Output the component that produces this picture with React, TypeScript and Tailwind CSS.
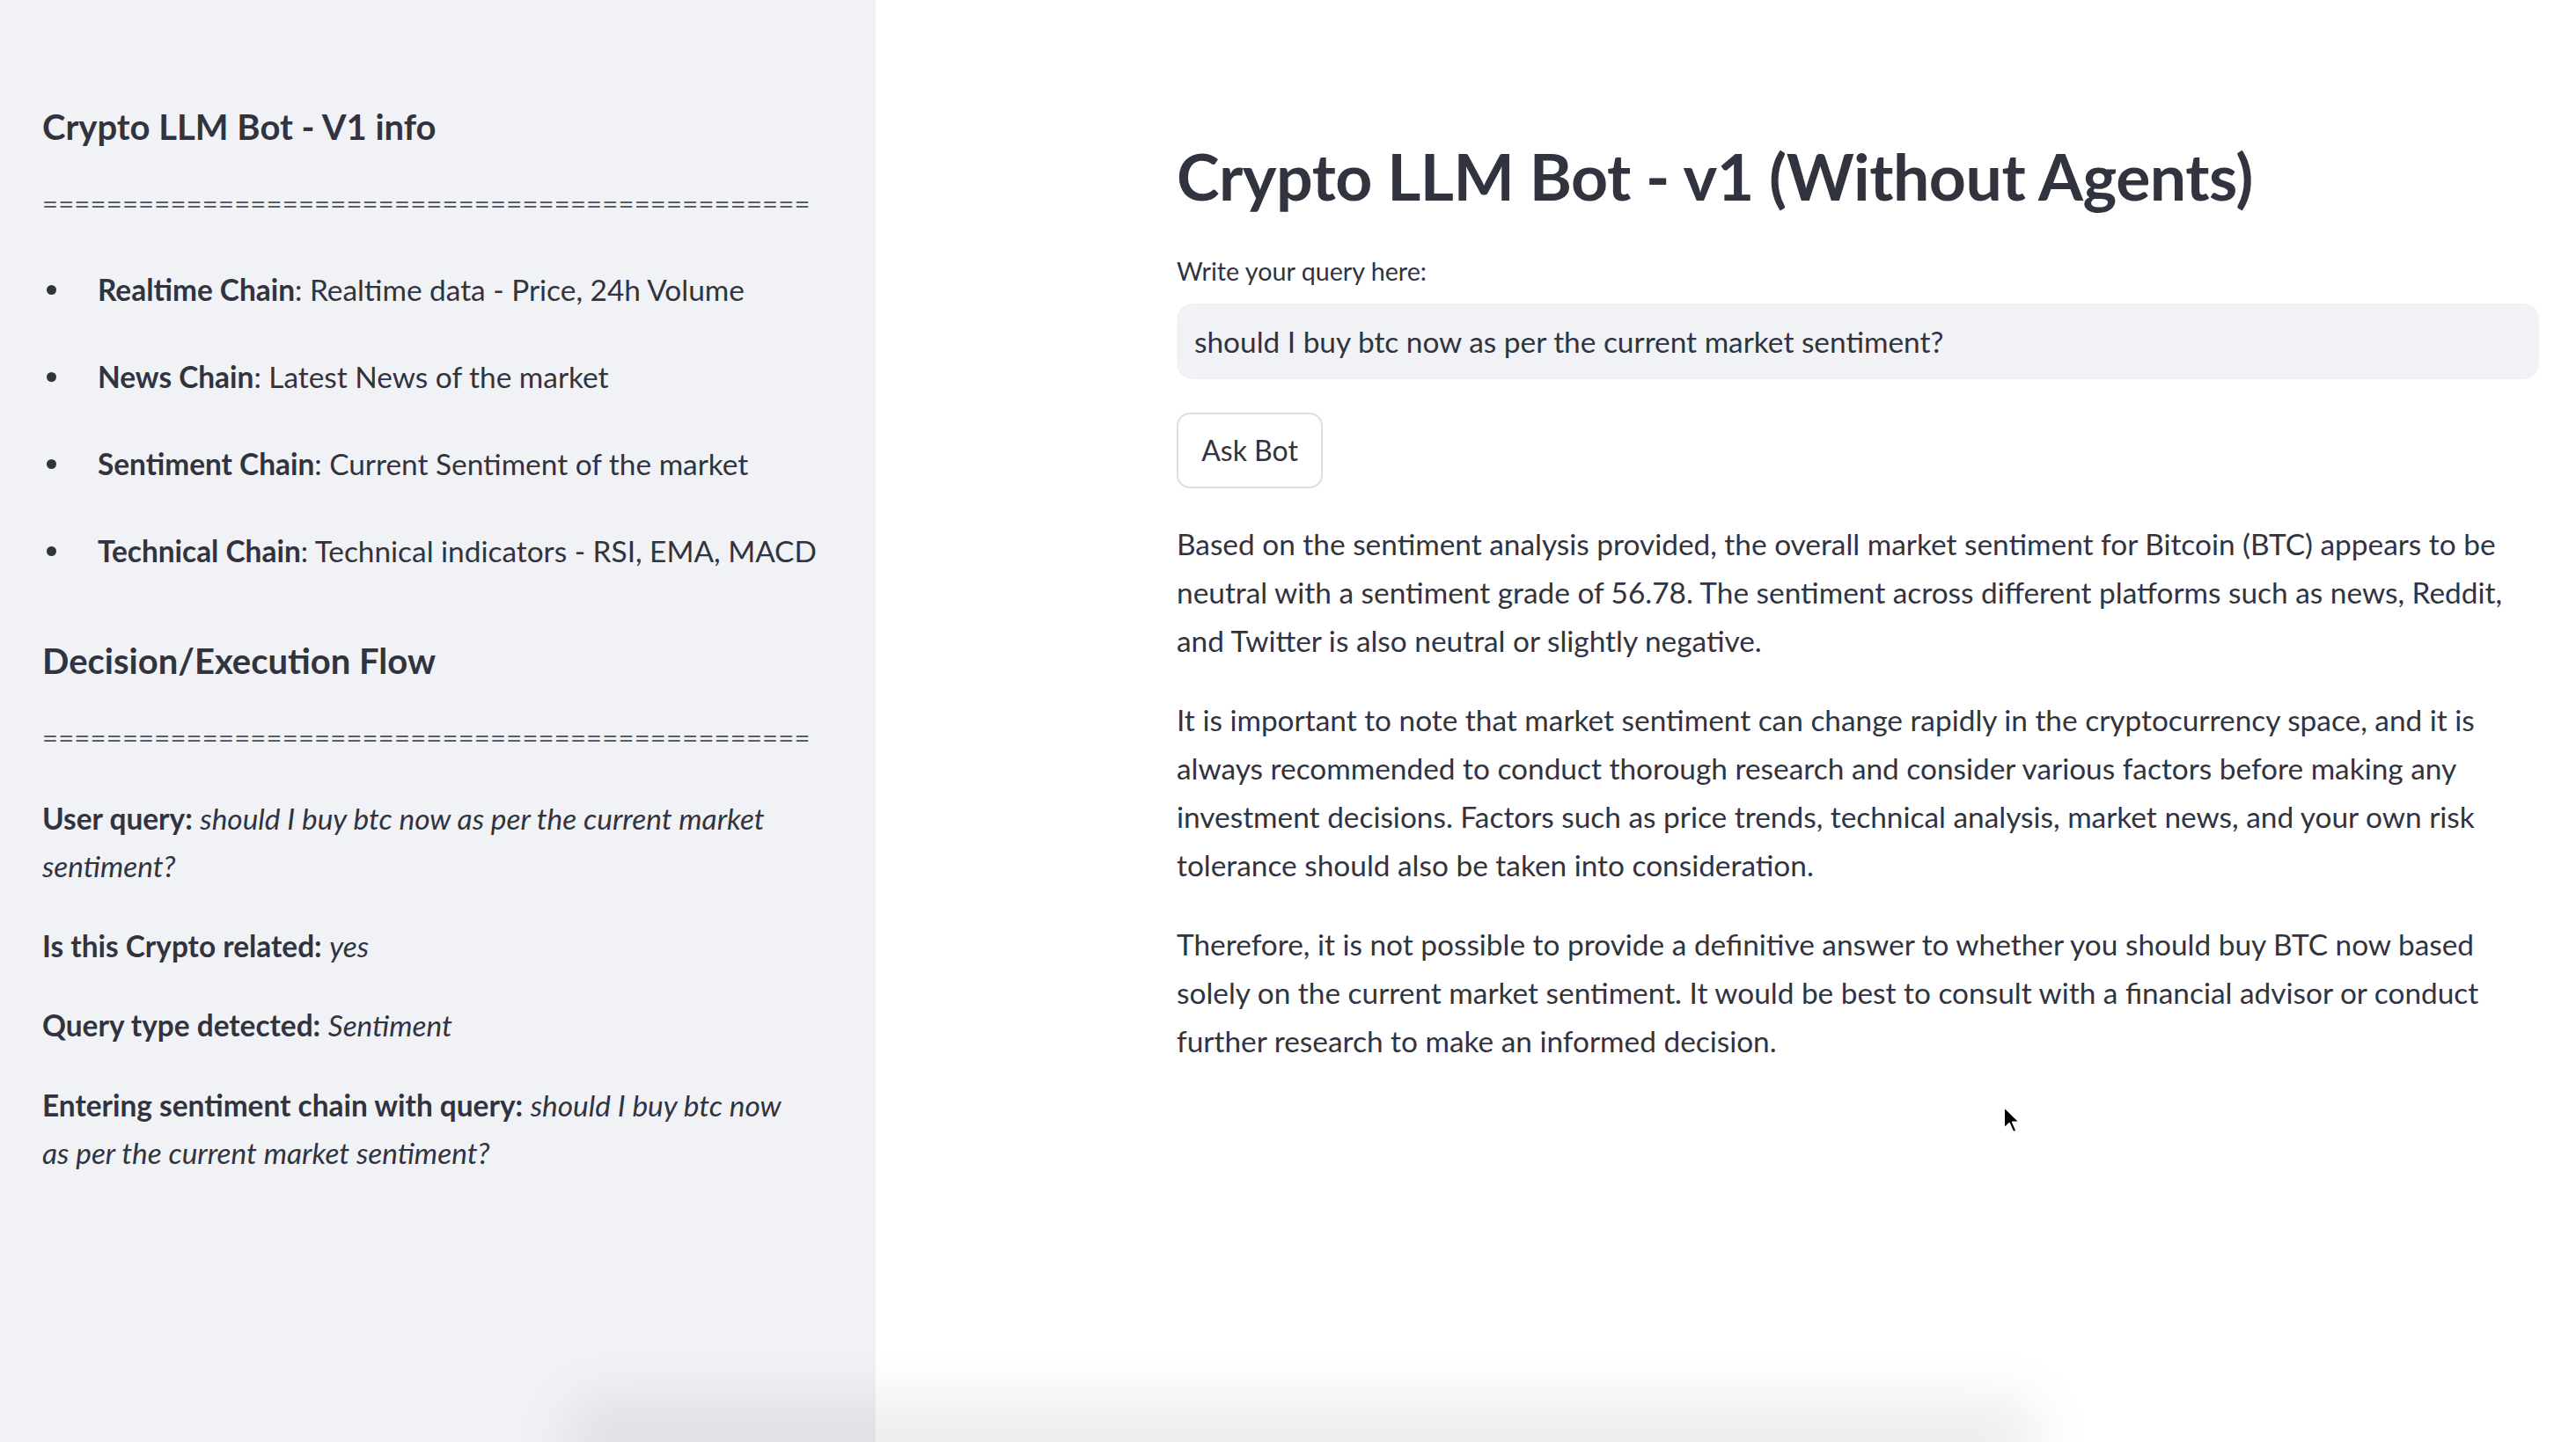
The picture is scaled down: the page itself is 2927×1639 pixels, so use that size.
import type { ReactNode } from 'react';

const chains = [
  { name: 'Realtime Chain', desc: 'Realtime data - Price, 24h Volume' },
  { name: 'News Chain', desc: 'Latest News of the market' },
  { name: 'Sentiment Chain', desc: 'Current Sentiment of the market' },
  { name: 'Technical Chain', desc: 'Technical indicators - RSI, EMA, MACD' },
];

const EQUALS = '='.repeat(48);

function Divider({ className }: { className?: string }) {
  return (
    <p className={`overflow-hidden whitespace-nowrap text-[31px] leading-[54px] tracking-[0.2px] text-[#5a5c66] ${className ?? ''}`}>
      {EQUALS}
    </p>
  );
}

function FlowLine({ label, children, className }: { label: string; children: ReactNode; className?: string }) {
  return (
    <p className={`text-[33.4px] leading-[54px] ${className ?? ''}`}>
      <span className="font-bold">{label}</span> <em>{children}</em>
    </p>
  );
}

function Cursor() {
  return (
    <svg
      className="pointer-events-none absolute left-[2274px] top-[1256px]"
      width="24"
      height="36"
      viewBox="0 0 24 36"
    >
      <path
        d="M3 2 L3 27 L9 21 L13.5 31 L17.5 29.5 L13 19.5 L21 19.5 Z"
        fill="#000"
        stroke="#fff"
        strokeWidth="2"
        strokeLinejoin="round"
      />
    </svg>
  );
}

export default function App() {
  return (
    <div className="relative flex h-[1639px] w-full overflow-hidden font-['Lato',sans-serif] text-[#31333f]">
      <aside className="w-[995px] shrink-0 bg-[#f0f2f6] pl-[48px] pr-[75px] pt-[114px]">
        <h3 className="text-[40px] font-bold leading-[60px]">Crypto LLM Bot - V1 info</h3>
        <Divider className="mt-[30px] w-[872px]" />
        <ul className="mt-[44px] flex flex-col gap-[45px]">
          {chains.map((c) => (
            <li key={c.name} className="flex items-center whitespace-nowrap text-[33.4px] leading-[54px]">
              <span className="ml-[5px] mr-[47px] size-[11px] shrink-0 rounded-full bg-[#31333f]" />
              <span>
                <span className="font-bold">{c.name}</span>: {c.desc}
              </span>
            </li>
          ))}
        </ul>
        <h3 className="mt-[68px] text-[40px] font-bold leading-[60px]">Decision/Execution Flow</h3>
        <Divider className="mt-[30px] w-[872px]" />
        <FlowLine label="User query:" className="mt-[38px]">
          should I buy btc now as per the current market sentiment?
        </FlowLine>
        <FlowLine label="Is this Crypto related:" className="mt-[37px]">
          yes
        </FlowLine>
        <FlowLine label="Query type detected:" className="mt-[36px]">
          Sentiment
        </FlowLine>
        <FlowLine label="Entering sentiment chain with query:" className="mt-[37px]">
          should I buy btc now as per the current market sentiment?
        </FlowLine>
      </aside>

      <main className="flex-1 bg-white pl-[342px] pr-[42px] pt-[150px]">
        <h1 className="text-[73.4px] font-bold leading-[100px] tracking-[-0.5px]">
          Crypto LLM Bot - v1 (Without Agents)
        </h1>
        <label className="mt-[38px] block text-[28.7px] leading-[40px]">Write your query here:</label>
        <div className="mt-[17px] flex h-[86px] items-center rounded-[18px] bg-[#f0f2f6] px-[20px] text-[33.4px]">
          should I buy btc now as per the current market sentiment?
        </div>
        <button className="mt-[38px] flex h-[86px] w-[166px] items-center justify-center rounded-[15px] border-2 border-[#dcdde1] bg-white text-[32px]">
          Ask Bot
        </button>
        <div className="mt-[36px] flex flex-col gap-[35px] text-[33.4px] leading-[55px]">
          <p>
            Based on the sentiment analysis provided, the overall market sentiment for Bitcoin (BTC) appears to be
            neutral with a sentiment grade of 56.78. The sentiment across different platforms such as news, Reddit,
            and Twitter is also neutral or slightly negative.
          </p>
          <p>
            It is important to note that market sentiment can change rapidly in the cryptocurrency space, and it is
            always recommended to conduct thorough research and consider various factors before making any
            investment decisions. Factors such as price trends, technical analysis, market news, and your own risk
            tolerance should also be taken into consideration.
          </p>
          <p>
            Therefore, it is not possible to provide a definitive answer to whether you should buy BTC now based
            solely on the current market sentiment. It would be best to consult with a financial advisor or conduct
            further research to make an informed decision.
          </p>
        </div>
      </main>

      <div className="pointer-events-none absolute bottom-[-40px] left-[640px] h-[90px] w-[1680px] rounded-full bg-[#00000012] blur-[30px]" />
      <Cursor />
    </div>
  );
}
